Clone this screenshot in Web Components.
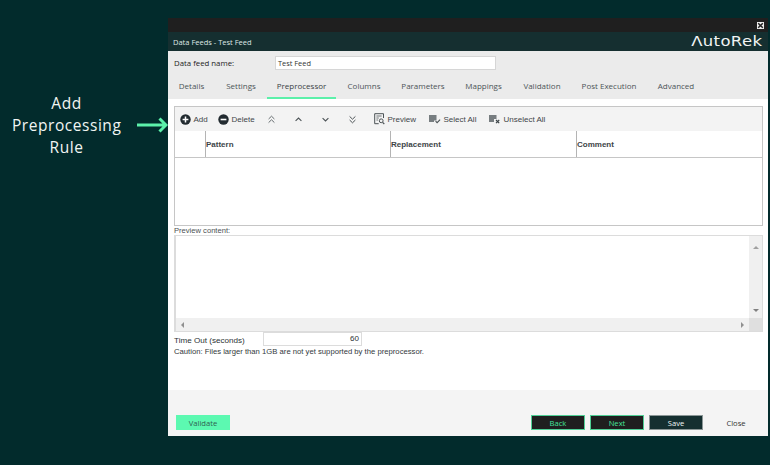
<!DOCTYPE html>
<html>
<head>
<meta charset="utf-8">
<title>Data Feeds</title>
<style>
    html, body { margin: 0; padding: 0; }
    body { background: #022b2c; font-family: "Open Sans", "Liberation Sans", sans-serif; }
</style>
</head>
<body>
<app-page>
    <side-note slot="note">Add<br>Preprocessing<br>Rule</side-note>
    <feed-dialog slot="dialog"></feed-dialog>
</app-page>

<script>
const ICONS = {
    add: `<svg width="11" height="11" viewBox="0 0 11 11"><circle cx="5.5" cy="5.5" r="5.2" fill="#222b30"/><path d="M5.5 2.6v5.8M2.6 5.5h5.8" stroke="#fff" stroke-width="1.5"/></svg>`,
    del: `<svg width="11" height="11" viewBox="0 0 11 11"><circle cx="5.5" cy="5.5" r="5.2" fill="#222b30"/><path d="M2.6 5.5h5.8" stroke="#fff" stroke-width="1.6"/></svg>`,
    top: `<svg width="7" height="9" viewBox="0 0 7 9" fill="none" stroke="#666d70" stroke-width="1"><path d="M.6 4 3.5 1.2 6.4 4M.6 7.6 3.5 4.8 6.4 7.6"/></svg>`,
    up: `<svg width="7" height="5" viewBox="0 0 7 5" fill="none" stroke="#4c5356" stroke-width="1.1"><path d="M.6 3.9 3.5 1.1 6.4 3.9"/></svg>`,
    down: `<svg width="7" height="5" viewBox="0 0 7 5" fill="none" stroke="#4c5356" stroke-width="1.1"><path d="M.6 1.1 3.5 3.9 6.4 1.1"/></svg>`,
    bottom: `<svg width="7" height="9" viewBox="0 0 7 9" fill="none" stroke="#4c5356" stroke-width="1"><path d="M.6 1.4 3.5 4.2 6.4 1.4M.6 5 3.5 7.8 6.4 5"/></svg>`,
    preview: `<svg width="11" height="12" viewBox="0 0 11 12" fill="none" stroke="#4c5356"><path d="M9.5 5V.7H.7v10h4"/><path d="M2.4 3h5.2M2.4 5h2.4M2.4 7h1.6" stroke-width=".8"/><circle cx="7.2" cy="7.8" r="1.9" stroke-width="1"/><path d="m8.6 9.3 1.7 1.7" stroke-width="1.2"/></svg>`,
    select: `<svg width="12" height="10" viewBox="0 0 12 10"><path d="M0 1h7.5v5.5H5V8H0z" fill="#777d80"/><path d="m6.6 7.2 1.5 1.5 3-3" fill="none" stroke="#4c5356" stroke-width="1.1"/></svg>`,
    unselect: `<svg width="12" height="10" viewBox="0 0 12 10"><path d="M0 1h7.5v4H5v3H0z" fill="#777d80"/><path d="m7 6 3.2 3.2M10.2 6 7 9.2" fill="none" stroke="#3c4448" stroke-width="1.2"/></svg>`
};

class AppPage extends HTMLElement {
    constructor() {
        super();
        this.attachShadow({ mode: "open" });
        this.shadowRoot.innerHTML = `
            <style>
                :host { display: flex; width: 770px; height: 465px; padding-top: 18px; box-sizing: border-box; background: #022b2c; overflow: hidden; }
                .left { flex: 0 0 168px; }
            </style>
            <div class="left"><slot name="note"></slot></div>
            <slot name="dialog"></slot>
        `;
    }
}

class SideNote extends HTMLElement {
    constructor() {
        super();
        this.attachShadow({ mode: "open" });
        this.shadowRoot.innerHTML = `
            <style>
                :host { display: flex; align-items: center; gap: 16px; padding: 74px 0 0 12px; color: #f1f5f3; }
                .txt { width: 109px; text-align: center; font: 15.5px/22px "Open Sans", sans-serif; letter-spacing: .55px; white-space: nowrap; }
                svg { display: block; flex: none; }
            </style>
            <div class="txt"><slot></slot></div>
            <svg width="31" height="16" viewBox="0 0 31 16" fill="none" stroke="#5cf0aa" stroke-width="3"><path d="M0 8h29M22.5 1.500 29 8l-6.500 6.500"/></svg>
        `;
    }
}

class FeedDialog extends HTMLElement {
    constructor() {
        super();
        this.attachShadow({ mode: "open" });
        this.shadowRoot.innerHTML = `
            <style>
                :host { display: flex; flex-direction: column; width: 600px; height: 418px; font: 8px "Open Sans", sans-serif; color: #3a4144; }
                .top { flex: 0 0 14px; background: #1f1f1f; display: flex; justify-content: flex-end; align-items: center; padding-right: 3px; }
                .x { width: 9px; height: 9px; box-sizing: border-box; background: #eee; border: 1px solid #222; display: flex; }
                .title { flex: 0 0 19px; background: #152f30; display: flex; align-items: center; justify-content: space-between; padding: 0 6px 0 5px; color: #dfe8e6; font-size: 7.5px; }
                .logo { font: 400 13.5px/1 "DejaVu Sans", sans-serif; letter-spacing: .3px; color: #f1f4f4; transform: scaleX(1.22); transform-origin: right center; }
                .head { flex: 0 0 48px; background: #ebebeb; }
                .name { display: flex; align-items: center; height: 24px; padding: 0 0 0 6px; color: #222; font-size: 7.8px; }
                .name label { width: 101px; }
                .input { width: 221px; height: 14px; box-sizing: border-box; background: #fff; border: 1px solid #d6d6d6; padding: 0 2px; line-height: 12px; font-size: 7.4px; color: #333; }
                .body { flex: 0 0 291px; background: #fff; padding: 7px 5px 0 6px; box-sizing: border-box; }
                .foot { flex: 1; background: #f4f4f4; display: flex; align-items: flex-start; padding: 25px 5px 0 8px; gap: 5px; }
                .label { font: 7.6px/9px "Liberation Sans", sans-serif; height: 9px; color: #4a5053; }
                .pre { height: 97px; box-sizing: border-box; border: 2px solid #dcdcdc; border-width: 1px 1px 1px 2px; display: grid; grid-template: 1fr 13px / 1fr 13px; }
                .pre i { background: #f0f0f0; display: flex; font-style: normal; }
                .pre .v { flex-direction: column; justify-content: space-between; align-items: center; padding: 10px 0 6px; }
                .pre .h { justify-content: space-between; align-items: center; padding: 0 5px; }
                .pre .c { background: #dfdfdf; }
                .up { width: 0; height: 0; border: 3px solid transparent; border-top: 0; border-bottom: 3px solid #a0a0a0; }
                .dn { width: 0; height: 0; border: 3px solid transparent; border-bottom: 0; border-top: 3px solid #808080; }
                .lt { width: 0; height: 0; border: 3.5px solid transparent; border-left: 0; border-right: 3px solid #909090; }
                .rt { width: 0; height: 0; border: 3.5px solid transparent; border-right: 0; border-left: 3px solid #909090; }
                .time { display: flex; align-items: center; height: 14px; color: #2c3235; font: 8.1px "Liberation Sans", sans-serif; }
                .time span { width: 89px; padding-top: 2px; }
                .time div { width: 99px; height: 14px; box-sizing: border-box; border: 1px solid #dcdcdc; text-align: right; padding-right: 2px; line-height: 12px; font-size: 8px; }
                .caution { font: 7.7px/10px "Liberation Sans", sans-serif; margin-top: 1px; color: #33393c; }
                .spacer { flex: 1; }
            </style>
            <div class="top"><div class="x"><svg width="7" height="7" viewBox="0 0 7 7"><path d="m1.200 1.200 4.600 4.600M5.800 1.200 1.200 5.800" stroke="#222" stroke-width="1.5"/></svg></div></div>
            <div class="title"><span>Data Feeds - Test Feed</span><span class="logo">ΛutoRek</span></div>
            <div class="head">
                <div class="name"><label>Data feed name:</label><div class="input">Test Feed</div></div>
                <tab-bar active="Preprocessor"></tab-bar>
            </div>
            <div class="body">
                <rule-grid></rule-grid>
                <div class="label">Preview content:</div>
                <div class="pre">
                    <div></div>
                    <i class="v"><b class="up"></b><b class="dn"></b></i>
                    <i class="h"><b class="lt"></b><b class="rt"></b></i>
                    <i class="c"></i>
                </div>
                <div class="time"><span>Time Out (seconds)</span><div>60</div></div>
                <div class="caution">Caution: Files larger than 1GB are not yet supported by the preprocessor.</div>
            </div>
            <div class="foot">
                <foot-btn kind="validate">Validate</foot-btn>
                <div class="spacer"></div>
                <foot-btn kind="nav">Back</foot-btn>
                <foot-btn kind="nav">Next</foot-btn>
                <foot-btn kind="save">Save</foot-btn>
                <foot-btn kind="plain" style="margin-left:1px">Close</foot-btn>
            </div>
        `;
    }
}

class TabBar extends HTMLElement {
    constructor() {
        super();
        this.attachShadow({ mode: "open" });
        const tabs = [
            ["Details", 47], ["Settings", 52], ["Preprocessor", 69], ["Columns", 56], ["Parameters", 62],
            ["Mappings", 59], ["Validation", 58], ["Post Execution", 76], ["Advanced", 58]
        ];
        const active = this.getAttribute("active");
        this.shadowRoot.innerHTML = `
            <style>
                :host { display: flex; height: 24px; padding-left: 0; font: 8px "Open Sans", sans-serif; color: #4d5558; }
                div { display: flex; align-items: center; justify-content: center; height: 24px; box-sizing: border-box; padding-bottom: 2px; border-bottom: 2px solid transparent; white-space: nowrap; }
                .on { border-bottom-color: #5cf0aa; color: #3a4144; }
            </style>
            ${tabs.map(([t, w]) => `<div class="${t === active ? "on" : ""}" style="width:${w}px">${t}</div>`).join("")}
        `;
    }
}

class ToolBtn extends HTMLElement {
    constructor() {
        super();
        this.attachShadow({ mode: "open" });
        const icon = ICONS[this.getAttribute("icon")];
        this.shadowRoot.innerHTML = `
            <style>
                :host { display: flex; align-items: center; gap: 2.5px; white-space: nowrap; font: 8px "Liberation Sans", sans-serif; color: #3f4649; }
                svg { display: block; flex: none; }
            </style>
            ${icon}<slot></slot>
        `;
    }
}

class RuleGrid extends HTMLElement {
    constructor() {
        super();
        this.attachShadow({ mode: "open" });
        this.shadowRoot.innerHTML = `
            <style>
                :host { display: block; height: 120px; box-sizing: border-box; border: 1px solid #c6c6c6; }
                .bar { display: flex; align-items: center; height: 24px; background: #f3f3f3; padding-left: 5px; }
                .bar tool-btn { flex: none; }
                .cols { display: grid; grid-template-columns: 30px 185px 186px 1fr; height: 27px; border-bottom: 1px solid #c6c6c6; box-sizing: border-box; font: 700 8px "Liberation Sans", sans-serif; color: #3d4447; }
                .cols div { display: flex; align-items: center; }
                .cols div + div { border-left: 1px solid #b4b4b4; }
            </style>
            <div class="bar">
                <tool-btn icon="add" style="width:38px">Add</tool-btn>
                <tool-btn icon="del" style="width:50px">Delete</tool-btn>
                <tool-btn icon="top" style="width:27px"></tool-btn>
                <tool-btn icon="up" style="width:27px"></tool-btn>
                <tool-btn icon="down" style="width:27px"></tool-btn>
                <tool-btn icon="bottom" style="width:25px"></tool-btn>
                <tool-btn icon="preview" style="width:55px">Preview</tool-btn>
                <tool-btn icon="select" style="width:60px">Select All</tool-btn>
                <tool-btn icon="unselect">Unselect All</tool-btn>
            </div>
            <div class="cols"><div></div><div>Pattern</div><div>Replacement</div><div>Comment</div></div>
        `;
    }
}

class FootBtn extends HTMLElement {
    constructor() {
        super();
        this.attachShadow({ mode: "open" });
        this.shadowRoot.innerHTML = `
            <style>
                :host { display: flex; align-items: center; justify-content: center; flex: none; width: 54px; height: 15px; box-sizing: border-box; font: 7.6px "Open Sans", sans-serif; }
                :host([kind="validate"]) { background: #5cf9b1; color: #2f5f50; }
                :host([kind="nav"]) { background: #1f1f1f; border: 1px solid #4fcf95; color: #45e39c; }
                :host([kind="save"]) { background: #152f30; border: 1px solid #8b9696; color: #f2f6f6; }
                :host([kind="plain"]) { color: #333; }
            </style>
            <slot></slot>
        `;
    }
}

customElements.define("app-page", AppPage);
customElements.define("side-note", SideNote);
customElements.define("tab-bar", TabBar);
customElements.define("tool-btn", ToolBtn);
customElements.define("rule-grid", RuleGrid);
customElements.define("foot-btn", FootBtn);
customElements.define("feed-dialog", FeedDialog);
</script>
</body>
</html>
